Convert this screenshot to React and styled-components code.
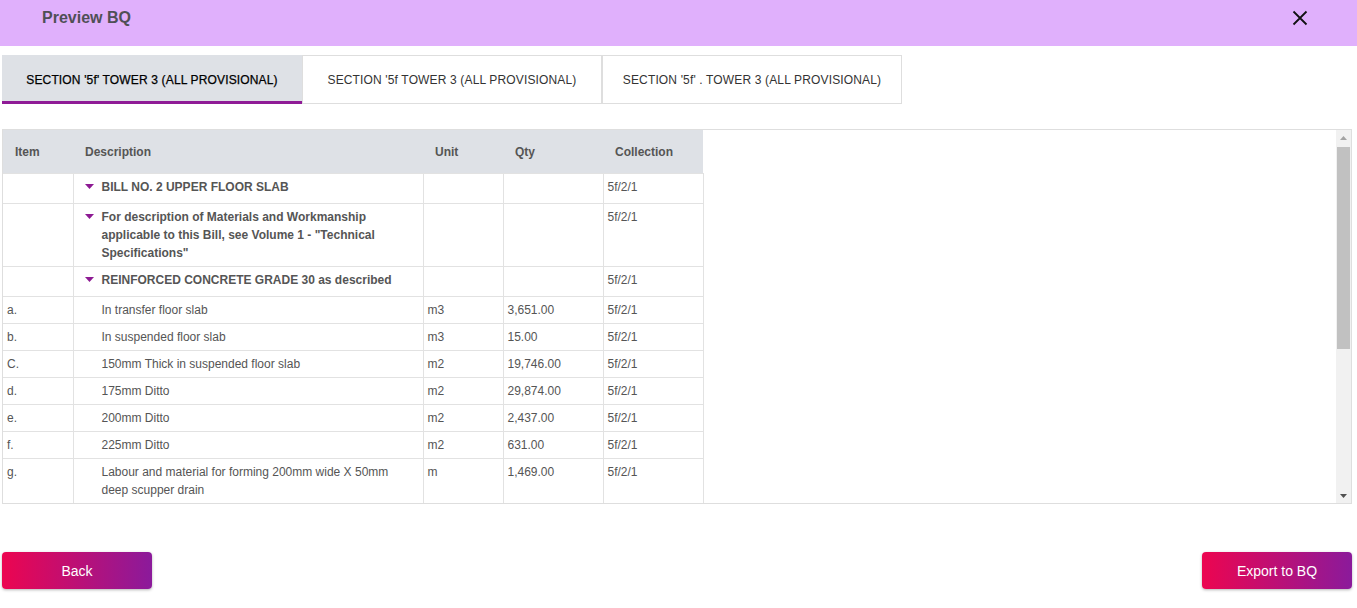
import React from 'react';
import styled, { createGlobalStyle } from 'styled-components';

const GlobalStyle = createGlobalStyle`
  body {
    margin: 0;
    font-family: "Liberation Sans", Arial, sans-serif;
    background: #fff;
  }
`;

const rows = [
  { group: true, desc: 'BILL NO. 2 UPPER FLOOR SLAB', col: '5f/2/1' },
  {
    group: true,
    desc: 'For description of Materials and Workmanship applicable to this Bill, see Volume 1 - "Technical Specifications"',
    col: '5f/2/1',
  },
  { group: true, desc: 'REINFORCED CONCRETE GRADE 30 as described', col: '5f/2/1' },
  { item: 'a.', desc: 'In transfer floor slab', unit: 'm3', qty: '3,651.00', col: '5f/2/1' },
  { item: 'b.', desc: 'In suspended floor slab', unit: 'm3', qty: '15.00', col: '5f/2/1' },
  { item: 'C.', desc: '150mm Thick in suspended floor slab', unit: 'm2', qty: '19,746.00', col: '5f/2/1' },
  { item: 'd.', desc: '175mm Ditto', unit: 'm2', qty: '29,874.00', col: '5f/2/1' },
  { item: 'e.', desc: '200mm Ditto', unit: 'm2', qty: '2,437.00', col: '5f/2/1' },
  { item: 'f.', desc: '225mm Ditto', unit: 'm2', qty: '631.00', col: '5f/2/1' },
  {
    item: 'g.',
    desc: 'Labour and material for forming 200mm wide X 50mm deep scupper drain',
    unit: 'm',
    qty: '1,469.00',
    col: '5f/2/1',
  },
];

const tabs = [
  "SECTION '5f' TOWER 3 (ALL PROVISIONAL)",
  "SECTION '5f TOWER 3 (ALL PROVISIONAL)",
  "SECTION '5f' . TOWER 3 (ALL PROVISIONAL)",
];

const Caret = () => (
  <CaretSvg width="9" height="5" viewBox="0 0 9 5">
    <path d="M0 0 H9 L4.5 5 Z" fill="#8d1a93" />
  </CaretSvg>
);

const CloseIcon = () => (
  <svg width="16" height="16" viewBox="0 0 16 16">
    <path d="M1.5 1.5 L14.5 14.5 M14.5 1.5 L1.5 14.5" stroke="#111" strokeWidth="1.8" />
  </svg>
);

const Arrow = ({ down, color }) => (
  <svg width="7" height="4" viewBox="0 0 7 4">
    <path d={down ? 'M0 0 H7 L3.5 4 Z' : 'M0 4 H7 L3.5 0 Z'} fill={color} />
  </svg>
);

const App = () => {
  return (
    <Page>
      <GlobalStyle />
      <Header>
        <Title>Preview BQ</Title>
        <CloseButton aria-label="Close">
          <CloseIcon />
        </CloseButton>
      </Header>

      <Body>
        <Tabs>
          {tabs.map((t, i) => (
            <Tab key={i} $active={i === 0}>
              {t}
            </Tab>
          ))}
        </Tabs>

        <TableBox>
          <TableArea>
            <Table>
              <colgroup>
                <col style={{ width: 70 }} />
                <col style={{ width: 350 }} />
                <col style={{ width: 80 }} />
                <col style={{ width: 100 }} />
                <col style={{ width: 100 }} />
              </colgroup>
              <thead>
                <tr>
                  <Th>Item</Th>
                  <Th>Description</Th>
                  <Th>Unit</Th>
                  <Th>Qty</Th>
                  <Th>Collection</Th>
                </tr>
              </thead>
              <tbody>
                {rows.map((r, i) => (
                  <Row key={i} $group={r.group}>
                    <Td>{r.item}</Td>
                    <Td>
                      {r.group ? (
                        <GroupDesc>
                          <Caret />
                          <span>{r.desc}</span>
                        </GroupDesc>
                      ) : (
                        <ItemDesc>{r.desc}</ItemDesc>
                      )}
                    </Td>
                    <Td>{r.unit}</Td>
                    <Td>{r.qty}</Td>
                    <Td>{r.col}</Td>
                  </Row>
                ))}
              </tbody>
            </Table>
          </TableArea>
          <ScrollBar>
            <ScrollButton>
              <Arrow color="#a3a3a3" />
            </ScrollButton>
            <ScrollTrack>
              <Thumb />
            </ScrollTrack>
            <ScrollButton>
              <Arrow down color="#505050" />
            </ScrollButton>
          </ScrollBar>
        </TableBox>

        <Footer>
          <GradientButton>Back</GradientButton>
          <GradientButton>Export to BQ</GradientButton>
        </Footer>
      </Body>
    </Page>
  );
};

export default App;

const Page = styled.div`
  width: 1357px;
  height: 608px;
  overflow: hidden;
`;

const Header = styled.header`
  height: 46px;
  background: #e0b0fc;
  display: flex;
  align-items: center;
  justify-content: space-between;
  padding: 0 49px 0 42px;
  box-sizing: border-box;
`;

const Title = styled.h2`
  margin: 0 0 10px;
  font-size: 16px;
  font-weight: bold;
  color: #4f4f55;
`;

const CloseButton = styled.button`
  border: 0;
  background: transparent;
  padding: 0;
  display: flex;
  margin-bottom: 10px;
  cursor: pointer;
`;

const Body = styled.div`
  padding: 9px 5px 0 2px;
`;

const Tabs = styled.div`
  display: flex;
`;

const Tab = styled.div`
  width: 300px;
  height: 49px;
  box-sizing: border-box;
  display: flex;
  align-items: center;
  justify-content: center;
  font-size: 12px;
  letter-spacing: 0.15px;
  color: ${(p) => (p.$active ? '#000' : '#333')};
  -webkit-text-stroke: ${(p) => (p.$active ? '0.25px #000' : '0')};
  background: ${(p) => (p.$active ? '#dee1e6' : '#fff')};
  border: ${(p) => (p.$active ? '0' : '1px solid #dedede')};
  border-bottom: ${(p) => (p.$active ? '3px solid #8f1b96' : '1px solid #dedede')};
  padding-top: ${(p) => (p.$active ? '3px' : '0')};
  & + & {
    border-left: 1px solid #dedede;
  }
`;

const TableBox = styled.div`
  margin-top: 25px;
  height: 373px;
  border: 1px solid #dedede;
  display: flex;
`;

const TableArea = styled.div`
  flex: 1;
  overflow: hidden;
`;

const ScrollBar = styled.div`
  width: 15px;
  flex: none;
  background: #f1f1f1;
  display: flex;
  flex-direction: column;
`;

const ScrollButton = styled.div`
  height: 15px;
  flex: none;
  display: flex;
  align-items: center;
  justify-content: center;
`;

const ScrollTrack = styled.div`
  flex: 1;
  padding: 2px 1px;
`;

const Thumb = styled.div`
  height: 202px;
  background: #c1c1c1;
`;

const Table = styled.table`
  width: 700px;
  table-layout: fixed;
  border-collapse: collapse;
  font-size: 12px;
  color: #555;
`;

const Th = styled.th`
  height: 43px;
  padding: 0 12px;
  background: #dee1e6;
  text-align: left;
  font-weight: bold;
  color: #555;
`;

const Row = styled.tr`
  height: ${(p) => (p.$group ? '30px' : '27px')};
`;

const Td = styled.td`
  border: 1px solid #e2e2e2;
  padding: 4px 4px 4px;
  line-height: 18px;
  vertical-align: top;
  &:first-child {
    border-left: 0;
  }
`;

const GroupDesc = styled.div`
  display: flex;
  align-items: flex-start;
  gap: 8px;
  padding-left: 7px;
  font-weight: bold;
`;

const CaretSvg = styled.svg`
  flex: none;
  margin-top: 6px;
`;

const ItemDesc = styled.div`
  padding: 0 20px 0 24px;
`;

const Footer = styled.div`
  margin-top: 48px;
  display: flex;
  justify-content: space-between;
`;

const GradientButton = styled.button`
  width: 150px;
  height: 37px;
  border: 0;
  border-radius: 4px;
  background: linear-gradient(90deg, #ec0550 0%, #8b1a9b 100%);
  color: #fff;
  font-family: "Liberation Sans", Arial, sans-serif;
  font-size: 14px;
  box-shadow: 0 1px 3px rgba(0, 0, 0, 0.3);
  cursor: pointer;
`;
